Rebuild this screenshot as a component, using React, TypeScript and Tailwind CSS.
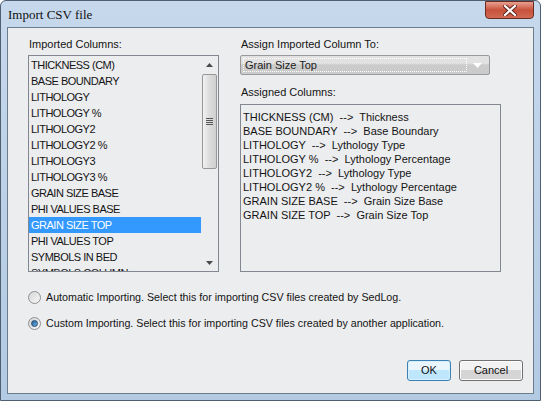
import { useState } from 'react'

const columns = [
  'THICKNESS (CM)',
  'BASE BOUNDARY',
  'LITHOLOGY',
  'LITHOLOGY %',
  'LITHOLOGY2',
  'LITHOLOGY2 %',
  'LITHOLOGY3',
  'LITHOLOGY3 %',
  'GRAIN SIZE BASE',
  'PHI VALUES BASE',
  'GRAIN SIZE TOP',
  'PHI VALUES TOP',
  'SYMBOLS IN BED',
  'SYMBOLS COLUMN',
]

const assigned = [
  'THICKNESS (CM)  -->  Thickness',
  'BASE BOUNDARY  -->  Base Boundary',
  'LITHOLOGY  -->  Lythology Type',
  'LITHOLOGY %  -->  Lythology Percentage',
  'LITHOLOGY2  -->  Lythology Type',
  'LITHOLOGY2 %  -->  Lythology Percentage',
  'GRAIN SIZE BASE  -->  Grain Size Base',
  'GRAIN SIZE TOP  -->  Grain Size Top',
]

function Radio({ checked, label }: { checked: boolean; label: string }) {
  return (
    <div className="flex items-center h-[13px]">
      <div className="w-[13px] h-[13px] rounded-full border border-[#8e8f8f] bg-gradient-to-br from-[#d6d6d6] to-[#f8f8f8] flex items-center justify-center">
        {checked && (
          <div className="w-[7px] h-[7px] rounded-full bg-gradient-to-br from-[#2b5f8e] to-[#6fb1e8] border border-[#1c4a73]" />
        )}
      </div>
      <span className="ml-[5px] whitespace-nowrap text-[10.7px]">{label}</span>
    </div>
  )
}

export default function App() {
  const [selected] = useState(10)

  return (
    <div
      className="w-[541px] h-[401px] overflow-hidden bg-gradient-to-b from-[#c6d8ec] via-[#bcd1e7] to-[#b3cae3] border border-[#4f5f72] rounded-t-[6px] text-[11px] leading-[13px] text-[#141414]"
      style={{ fontFamily: '"Liberation Sans", Arial, sans-serif' }}
    >
      {/* Title bar */}
      <div className="relative h-[26px] flex items-center pl-[7px]">
        <span
          className="text-[13px] text-[#111] pt-[1px]"
          style={{ fontFamily: '"Liberation Serif", "Times New Roman", serif' }}
        >
          Import CSV file
        </span>
        <div className="absolute right-[6px] top-0 w-[49px] h-[18px] rounded-b-[4px] border border-[#6b2a22] bg-gradient-to-b from-[#e8a090] via-[#c8513c] to-[#d06a50] flex items-center justify-center">
          <svg width="14" height="11" viewBox="0 0 14 11">
            <path d="M2 1 L12 10 M12 1 L2 10" stroke="#5a2018" strokeWidth="4" strokeLinecap="square" />
            <path d="M2 1 L12 10 M12 1 L2 10" stroke="#ffffff" strokeWidth="2.2" strokeLinecap="square" />
          </svg>
        </div>
      </div>

      {/* Client area */}
      <div className="ml-[6px] w-[527px] h-[367px] border border-[#6d7c8c] bg-[#ecedef] flex flex-col pl-[20px] pt-[10px]">
        <div className="flex gap-[21px]">
          {/* Left column */}
          <div className="flex flex-col w-[191px]">
            <div className="pl-[1px] mb-[4px]">Imported Columns:</div>
            <div className="h-[217px] border border-[#828790] flex overflow-hidden">
              <div className="flex-1 pt-[1px] overflow-hidden">
                {columns.map((c, i) => (
                  <div
                    key={c}
                    className={
                      'h-[16px] flex items-center pl-[2px] whitespace-nowrap tracking-[-0.5px] ' +
                      (i === selected ? 'bg-[#3399ff] text-white' : '')
                    }
                  >
                    {c}
                  </div>
                ))}
              </div>
              <div className="w-[17px] flex flex-col items-center">
                <div className="h-[17px] flex items-center justify-center">
                  <svg width="7" height="4" viewBox="0 0 7 4">
                    <path d="M0 4 L3.5 0 L7 4 Z" fill="#4a4a4a" />
                  </svg>
                </div>
                <div className="mt-[1px] w-[15px] h-[95px] rounded-[2px] border border-[#979797] bg-gradient-to-r from-[#f2f2f2] via-[#dcdcdc] to-[#cfcfcf] flex items-center justify-center">
                  <div className="flex flex-col gap-[1px]">
                    <div className="w-[7px] h-[1px] bg-[#555]" />
                    <div className="w-[7px] h-[1px] bg-[#555]" />
                    <div className="w-[7px] h-[1px] bg-[#555]" />
                    <div className="w-[7px] h-[1px] bg-[#555]" />
                  </div>
                </div>
                <div className="flex-1" />
                <div className="h-[17px] flex items-center justify-center">
                  <svg width="7" height="4" viewBox="0 0 7 4">
                    <path d="M0 0 L7 0 L3.5 4 Z" fill="#4a4a4a" />
                  </svg>
                </div>
              </div>
            </div>
          </div>

          {/* Right column */}
          <div className="flex flex-col w-[261px]">
            <div className="pl-[1px] mb-[4px]">Assign Imported Column To:</div>
            <div className="w-[250px] h-[20px] border border-[#9a9a9a] rounded-[2px] bg-gradient-to-b from-[#e2e2e2] from-40% to-[#cbcbcb] to-50% flex items-center px-[2px]">
              <div className="flex-1 h-[14px] border border-dotted border-white flex items-center pl-[1px] text-[#222]">
                Grain Size Top
              </div>
              <div className="w-[20px] flex items-center justify-center">
                <svg width="9" height="5" viewBox="0 0 9 5">
                  <path d="M0 0 L9 0 L4.5 5 Z" fill="#ffffff" />
                </svg>
              </div>
            </div>
            <div className="pl-[1px] mt-[11px] mb-[5px]">Assigned Columns:</div>
            <div className="h-[168px] border border-[#828790] pt-[5px] pl-[2px]">
              {assigned.map((a) => (
                <div key={a} className="h-[14px] flex items-center whitespace-pre">
                  {a}
                </div>
              ))}
            </div>
          </div>
        </div>

        <div className="mt-[19px] flex flex-col gap-[13px]">
          <Radio checked={false} label="Automatic Importing. Select this for importing CSV files created by SedLog." />
          <Radio checked={true} label="Custom Importing. Select this for importing CSV files created by another application." />
        </div>

        <div className="mt-[30px] flex justify-end gap-[8px] pr-[10px]">
          <button className="w-[44px] h-[21px] rounded-[3px] border border-[#3c7fb1] bg-gradient-to-b from-[#eaf6fd] from-45% to-[#bee6fd] to-50% text-[#111] shadow-[inset_0_0_0_1px_#d8f0fc]">
            OK
          </button>
          <button className="w-[64px] h-[21px] rounded-[3px] border border-[#707070] bg-gradient-to-b from-[#f2f2f2] from-45% to-[#d5d5d5] to-50% text-[#111] shadow-[inset_0_0_0_1px_#fcfcfc]">
            Cancel
          </button>
        </div>
      </div>
    </div>
  )
}
